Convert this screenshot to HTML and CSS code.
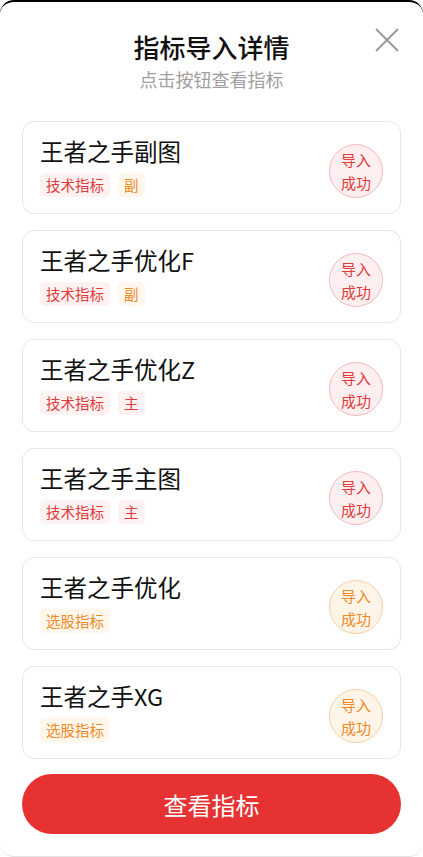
FILE: index.html
```html
<!DOCTYPE html>
<html lang="zh-CN">
<head>
    <meta charset="UTF-8">
    <meta name="viewport" content="width=device-width, initial-scale=1.0">
    <title>指标导入详情</title>
    <link rel="stylesheet" href="styles.css">
</head>
<body>
    <div class="sheet">
        <div class="sheet-header">
            <h1>指标导入详情</h1>
            <p class="subtitle">点击按钮查看指标</p>
            <button class="close-btn" aria-label="关闭">
                <svg width="24" height="24" viewBox="0 0 24 24">
                    <path d="M1 1L23 23M23 1L1 23" stroke="#9a9a9a" stroke-width="2" fill="none"/>
                </svg>
            </button>
        </div>

        <ul class="result-list">
            <li class="result-card">
                <div class="result-info">
                    <div class="result-name">王者之手副图</div>
                    <div class="tags">
                        <span class="tag tag-red">技术指标</span>
                        <span class="tag tag-orange">副</span>
                    </div>
                </div>
                <div class="status status-red">导入<br>成功</div>
            </li>
            <li class="result-card">
                <div class="result-info">
                    <div class="result-name">王者之手优化F</div>
                    <div class="tags">
                        <span class="tag tag-red">技术指标</span>
                        <span class="tag tag-orange">副</span>
                    </div>
                </div>
                <div class="status status-red">导入<br>成功</div>
            </li>
            <li class="result-card">
                <div class="result-info">
                    <div class="result-name">王者之手优化Z</div>
                    <div class="tags">
                        <span class="tag tag-red">技术指标</span>
                        <span class="tag tag-red">主</span>
                    </div>
                </div>
                <div class="status status-red">导入<br>成功</div>
            </li>
            <li class="result-card">
                <div class="result-info">
                    <div class="result-name">王者之手主图</div>
                    <div class="tags">
                        <span class="tag tag-red">技术指标</span>
                        <span class="tag tag-red">主</span>
                    </div>
                </div>
                <div class="status status-red">导入<br>成功</div>
            </li>
            <li class="result-card">
                <div class="result-info">
                    <div class="result-name">王者之手优化</div>
                    <div class="tags">
                        <span class="tag tag-orange">选股指标</span>
                    </div>
                </div>
                <div class="status status-orange">导入<br>成功</div>
            </li>
            <li class="result-card">
                <div class="result-info">
                    <div class="result-name">王者之手XG</div>
                    <div class="tags">
                        <span class="tag tag-orange">选股指标</span>
                    </div>
                </div>
                <div class="status status-orange">导入<br>成功</div>
            </li>
        </ul>

        <button class="view-btn">查看指标</button>
    </div>
</body>
</html>
```

FILE: styles.css
```css
* {
    margin: 0;
    padding: 0;
    box-sizing: border-box;
}

body {
    background-color: #fff;
    font-family: "Noto Sans CJK SC", "Noto Sans", sans-serif;
    color: #111;
}

.sheet {
    height: 857px;
    padding: 0 22px;
    background-color: #fff;
    border-top: 2px solid #000;
    border-bottom: 1px solid #e4e4e4;
    border-radius: 14px;
}

.sheet-header {
    position: relative;
    text-align: center;
    padding-top: 26px;
}

h1 {
    font-size: 26px;
    font-weight: 500;
    line-height: 38px;
    color: #111;
}

.subtitle {
    margin-top: 1px;
    font-size: 18px;
    line-height: 24px;
    color: #a0a0a0;
}

.close-btn {
    position: absolute;
    top: 26px;
    right: 2px;
    width: 24px;
    height: 24px;
    border: none;
    background: none;
    cursor: pointer;
}

.close-btn svg {
    display: block;
}

.result-list {
    list-style: none;
    margin-top: 30px;
    display: flex;
    flex-direction: column;
    gap: 16px;
}

.result-card {
    display: flex;
    align-items: center;
    justify-content: space-between;
    height: 93px;
    padding: 0 17px 4px 17px;
    border: 1px solid #e6e6e6;
    border-radius: 12px;
}

.result-name {
    font-size: 23.5px;
    line-height: 32px;
    color: #111;
}

.tags {
    display: flex;
    gap: 8px;
    margin-top: 6px;
}

.tag {
    display: inline-block;
    height: 24px;
    padding: 0 6px;
    font-size: 14.5px;
    line-height: 24px;
    border-radius: 5px;
}

.tag-red {
    color: #e03a3a;
    background-color: #fdf1f1;
}

.tag-orange {
    color: #ef8a26;
    background-color: #fff6ec;
}

.status {
    width: 54px;
    height: 54px;
    margin-top: 10px;
    border-radius: 50%;
    display: flex;
    align-items: center;
    justify-content: center;
    text-align: center;
    font-size: 15px;
    line-height: 23px;
}

.status-red {
    color: #e03a3a;
    background-color: #fdeff0;
    border: 1px solid #f3b9bd;
}

.status-orange {
    color: #ef8a26;
    background-color: #fff4e8;
    border: 1px solid #f6cfa6;
}

.view-btn {
    display: block;
    width: 100%;
    height: 60px;
    margin-top: 15px;
    border: none;
    border-radius: 30px;
    background-color: #e63233;
    color: #fff;
    font-family: inherit;
    font-size: 24px;
    cursor: pointer;
}
```
